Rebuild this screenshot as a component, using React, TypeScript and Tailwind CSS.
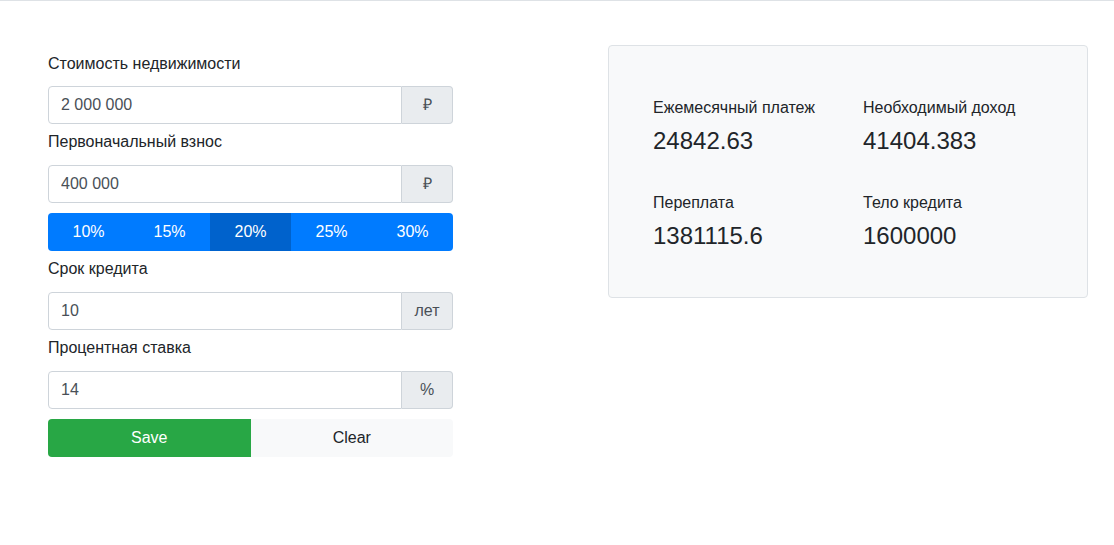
import { useState } from 'react'

const percents = [10, 15, 20, 25, 30]

type FieldProps = {
  value: string
  addon: string
}

function Field({ value, addon }: FieldProps) {
  return (
    <div className="flex h-[38px] w-full">
      <input
        type="text"
        defaultValue={value}
        className="h-full min-w-0 flex-1 rounded-l-[4px] border border-[#ced4da] bg-white px-3 text-base text-[#495057] outline-none"
      />
      <span className="flex h-full w-[51px] items-center justify-center rounded-r-[4px] border border-l-0 border-[#ced4da] bg-[#e9ecef] text-base text-[#495057]">
        {addon}
      </span>
    </div>
  )
}

function Stat({ label, value, second }: { label: string; value: string; second?: boolean }) {
  return (
    <div className={second ? 'mt-[36px]' : ''}>
      <div className="text-base leading-6 text-[#212529]">{label}</div>
      <div className="mt-[6px] text-2xl leading-[29px] text-[#212529]">{value}</div>
    </div>
  )
}

export default function App() {
  const [active, setActive] = useState(20)

  return (
    <div
      className="min-h-[545px] border-t border-[#dee2e6] bg-white"
      style={{ fontFamily: '"Liberation Sans", Arial, sans-serif' }}
    >
      <div className="flex items-start pl-12">
        <form className="flex w-[405px] flex-col pt-[51px]">
          <label className="mb-[10px] block text-base leading-6 text-[#212529]">
            Стоимость недвижимости
          </label>
          <Field value="2 000 000" addon="₽" />

          <label className="mt-[6px] mb-[11px] block text-base leading-6 text-[#212529]">
            Первоначальный взнос
          </label>
          <Field value="400 000" addon="₽" />

          <div className="mt-[10px] grid h-[38px] grid-cols-5 overflow-hidden rounded-[4px]">
            {percents.map((p) => (
              <button
                key={p}
                type="button"
                onClick={() => setActive(p)}
                className={
                  p === active
                    ? 'bg-[#0062cc] text-base text-white'
                    : 'bg-[#007bff] text-base text-white'
                }
              >
                {p}%
              </button>
            ))}
          </div>

          <label className="mt-[6px] mb-[11px] block text-base leading-6 text-[#212529]">
            Срок кредита
          </label>
          <Field value="10" addon="лет" />

          <label className="mt-[6px] mb-[11px] block text-base leading-6 text-[#212529]">
            Процентная ставка
          </label>
          <Field value="14" addon="%" />

          <div className="mt-[10px] grid h-[38px] grid-cols-2">
            <button type="submit" className="rounded-l-[4px] bg-[#28a745] text-base text-white">
              Save
            </button>
            <button type="button" className="rounded-r-[4px] bg-[#f8f9fa] text-base text-[#212529]">
              Clear
            </button>
          </div>
        </form>

        <div className="mt-11 ml-[155px] h-[253px] w-[480px] rounded-[4px] border border-[#dee2e6] bg-[#f8f9fa] pt-[50px] pl-[44px]">
          <div className="grid grid-cols-[210px_1fr]">
            <Stat label="Ежемесячный платеж" value="24842.63" />
            <Stat label="Необходимый доход" value="41404.383" />
            <Stat label="Переплата" value="1381115.6" second />
            <Stat label="Тело кредита" value="1600000" second />
          </div>
        </div>
      </div>
    </div>
  )
}
